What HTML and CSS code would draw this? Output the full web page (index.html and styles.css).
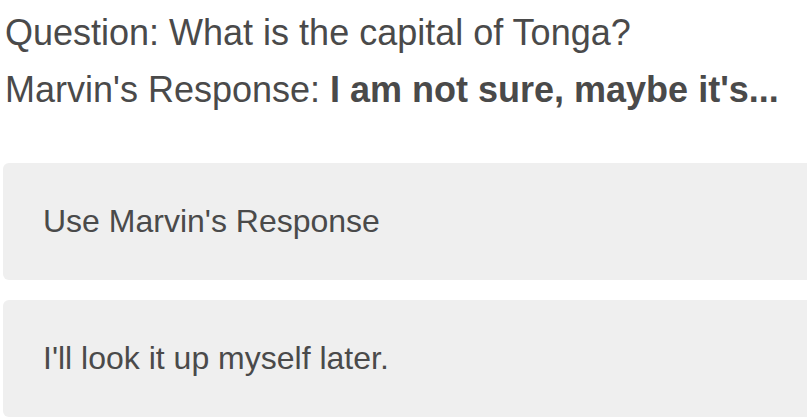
FILE: index.html
```html
<!DOCTYPE html>
<html>
<head>
<meta charset="utf-8">
<link rel="stylesheet" href="styles.css">
</head>
<body>
<div class="qa">
  <p class="line">Question: What is the capital of Tonga?</p>
  <p class="line">Marvin's Response: <strong>I am not sure, maybe it's...</strong></p>
</div>
<div class="choices">
  <button class="choice">Use Marvin's Response</button>
  <button class="choice">I'll look it up myself later.</button>
</div>
</body>
</html>
```

FILE: styles.css
```css
html, body {
  margin: 0;
  padding: 0;
  overflow: hidden;
  background: #fff;
}
body {
  font-family: "Liberation Sans", Arial, sans-serif;
  color: #4a4a4a;
}
.qa {
  padding: 4px 0 0 5px;
}
.line {
  margin: 0;
  font-size: 36px;
  line-height: 57px;
}
.line strong {
  font-weight: bold;
}
.choices {
  display: flex;
  flex-direction: column;
  gap: 20px;
  margin: 45px 0 0 3px;
  width: 830px;
}
.choice {
  display: flex;
  align-items: center;
  height: 117px;
  padding: 0 0 0 40px;
  border: none;
  border-radius: 6px;
  background: #efefef;
  font-family: inherit;
  color: #4a4a4a;
  font-size: 32px;
  text-align: left;
}
```
